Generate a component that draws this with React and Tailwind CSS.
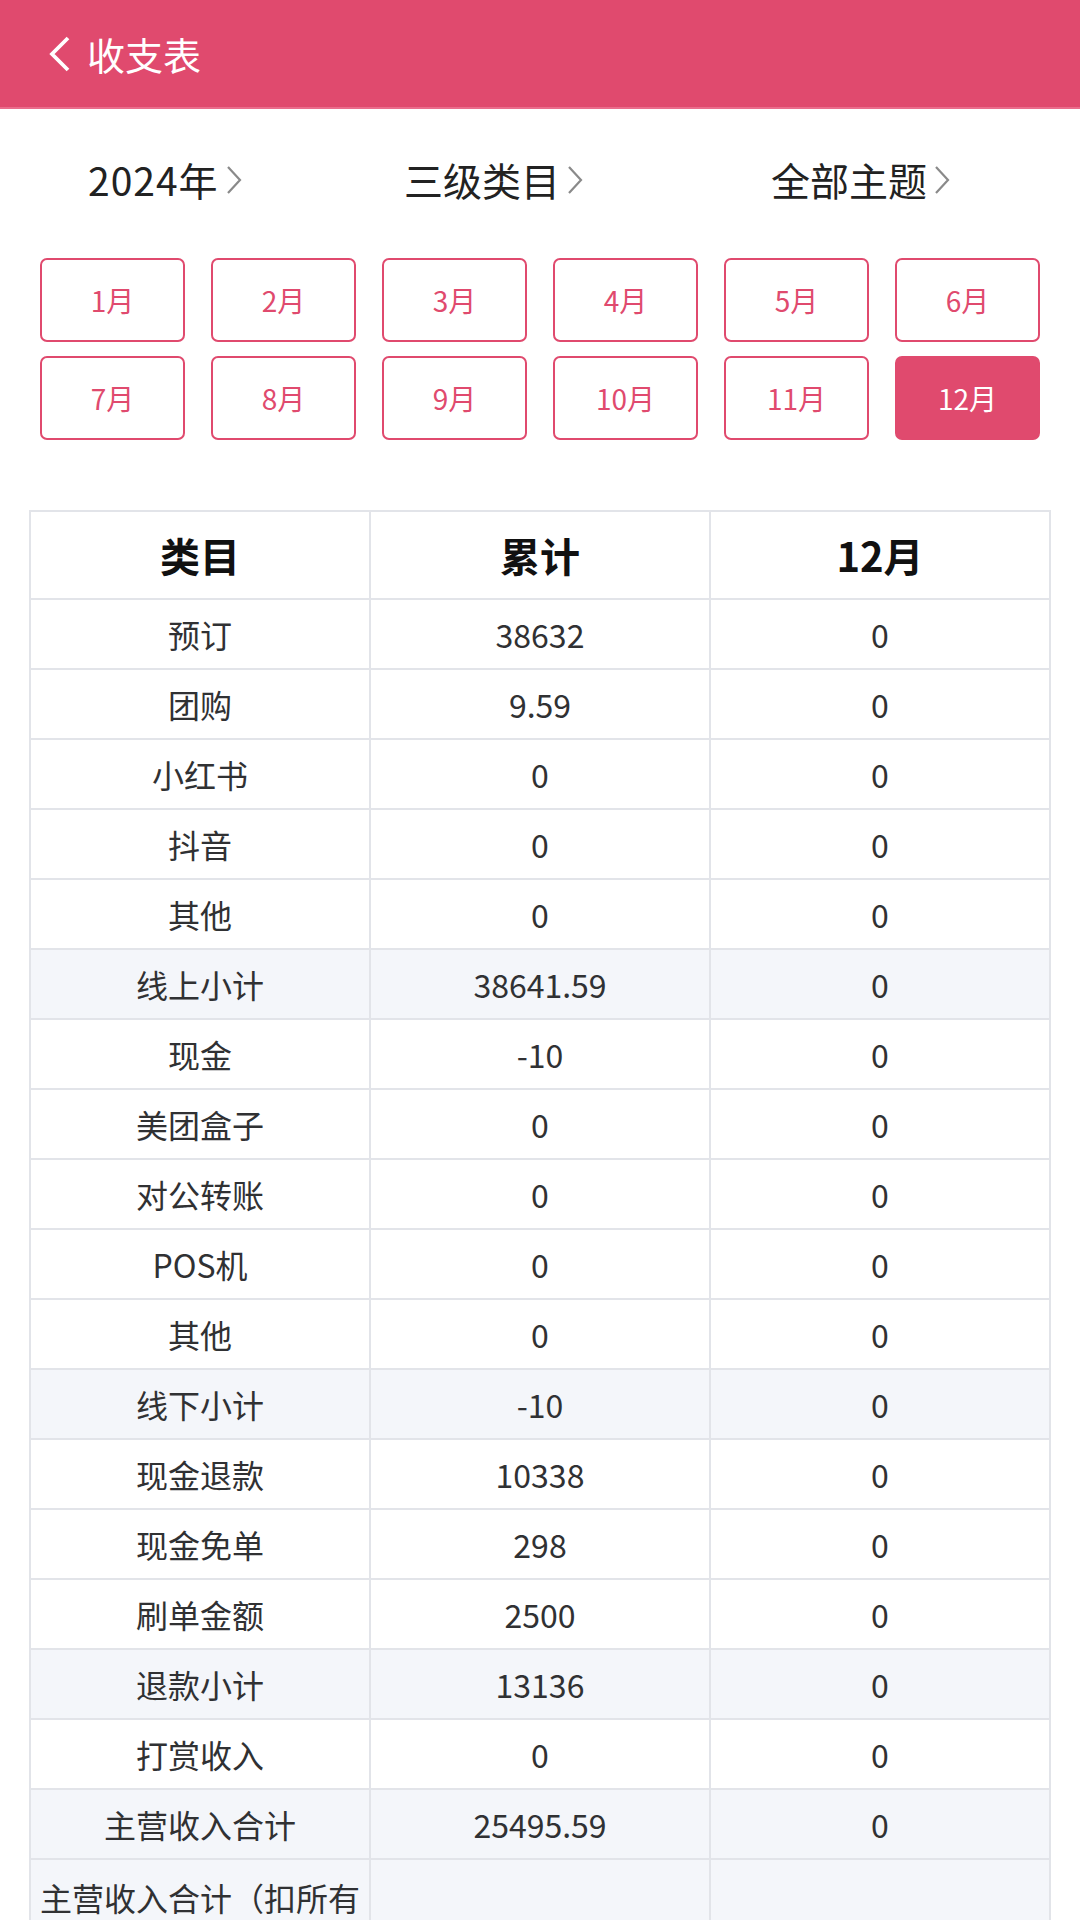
import React from 'react';

const months = ['1月', '2月', '3月', '4月', '5月', '6月', '7月', '8月', '9月', '10月', '11月', '12月'];

const rows = [
  { name: '预订', total: '38632', month: '0' },
  { name: '团购', total: '9.59', month: '0' },
  { name: '小红书', total: '0', month: '0' },
  { name: '抖音', total: '0', month: '0' },
  { name: '其他', total: '0', month: '0' },
  { name: '线上小计', total: '38641.59', month: '0', sub: true },
  { name: '现金', total: '-10', month: '0' },
  { name: '美团盒子', total: '0', month: '0' },
  { name: '对公转账', total: '0', month: '0' },
  { name: 'POS机', total: '0', month: '0' },
  { name: '其他', total: '0', month: '0' },
  { name: '线下小计', total: '-10', month: '0', sub: true },
  { name: '现金退款', total: '10338', month: '0' },
  { name: '现金免单', total: '298', month: '0' },
  { name: '刷单金额', total: '2500', month: '0' },
  { name: '退款小计', total: '13136', month: '0', sub: true },
  { name: '打赏收入', total: '0', month: '0' },
  { name: '主营收入合计', total: '25495.59', month: '0', sub: true },
];

const Chevron = () => (
  <svg width="16" height="32" viewBox="0 0 16 32" className="ml-[7px] mt-[2px]">
    <path d="M2 3 L14 16 L2 29" fill="none" stroke="#8a8a8a" strokeWidth="2.2" />
  </svg>
);

const App = () => {
  const selected = '12月';

  return (
    <div className="w-[1080px] h-[1920px] overflow-hidden bg-white font-['Noto_Sans_CJK_SC','Noto_Sans',sans-serif]">
      {/* header */}
      <div className="h-[109px] bg-[#e04a6e] border-b-[2px] border-[#ea6d8c] flex items-center pl-[45px]">
        <svg width="28" height="38" viewBox="0 0 28 38">
          <path d="M23 3 L7 19 L23 35" fill="none" stroke="#ffffff" strokeWidth="3.8" />
        </svg>
        <span className="ml-[14px] text-white text-[38px] leading-none">收支表</span>
      </div>

      {/* filters */}
      <div className="h-[140px] flex items-center pl-[88px] text-[39px] text-[#222] leading-none">
        <div className="w-[316px] flex items-center">
          <span className="tracking-[1px]">2024年</span>
          <Chevron />
        </div>
        <div className="w-[367px] flex items-center">
          <span>三级类目</span>
          <Chevron />
        </div>
        <div className="flex items-center">
          <span>全部主题</span>
          <Chevron />
        </div>
      </div>

      {/* months */}
      <div className="grid grid-cols-6 gap-x-[26px] gap-y-[14px] px-[40px] pt-[9px]">
        {months.map((m) => (
          <div
            key={m}
            className={`h-[84px] rounded-[7px] border-[2px] border-[#e04a6e] flex items-center justify-center text-[28px] ${
              m === selected ? 'bg-[#e04a6e] text-white' : 'bg-white text-[#e04a6e]'
            }`}
          >
            {m}
          </div>
        ))}
      </div>

      {/* table */}
      <div className="mx-[29px] mt-[70px]">
        <table className="w-full table-fixed border-collapse text-center">
          <thead>
            <tr className="h-[88px]">
              <th className="border-[2px] border-[#e2e4e9] text-[40px] font-bold text-[#111]">类目</th>
              <th className="border-[2px] border-[#e2e4e9] text-[40px] font-bold text-[#111]">累计</th>
              <th className="border-[2px] border-[#e2e4e9] text-[40px] font-bold text-[#111]">12月</th>
            </tr>
          </thead>
          <tbody className="text-[32px] text-[#303133]">
            {rows.map((r, i) => (
              <tr key={i} className={`h-[70px] ${r.sub ? 'bg-[#f4f6fa]' : 'bg-white'}`}>
                <td className="border-[2px] border-[#e2e4e9] px-[6px]">{r.name}</td>
                <td className="border-[2px] border-[#e2e4e9] px-[6px]">{r.total}</td>
                <td className="border-[2px] border-[#e2e4e9] px-[6px]">{r.month}</td>
              </tr>
            ))}
            <tr className="bg-[#f4f6fa]">
              <td className="border-[2px] border-[#e2e4e9] px-[6px] pt-[14px] pb-[14px] leading-[46px] align-top">
                主营收入合计（扣所有支出）
              </td>
              <td className="border-[2px] border-[#e2e4e9]"></td>
              <td className="border-[2px] border-[#e2e4e9]"></td>
            </tr>
          </tbody>
        </table>
      </div>
    </div>
  );
};

export default App;
